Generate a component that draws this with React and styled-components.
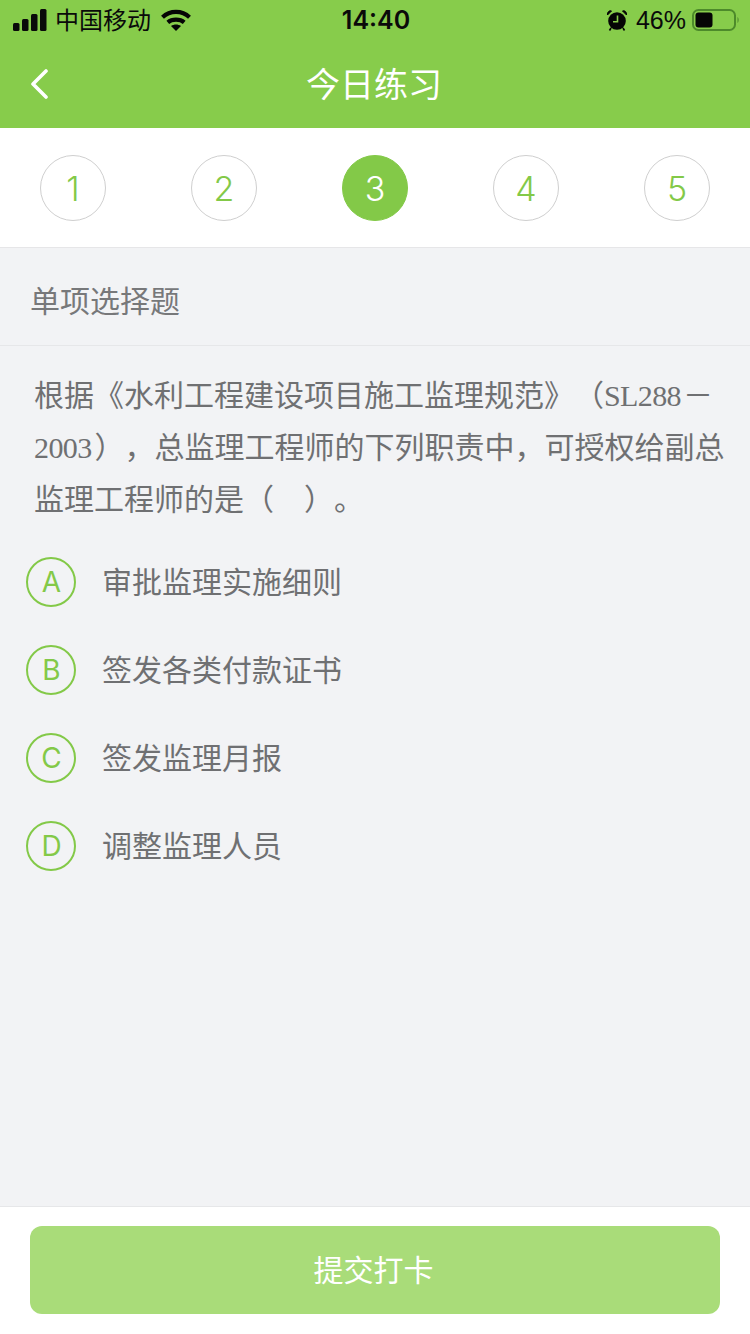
import styled, { createGlobalStyle } from "styled-components";

const GlobalStyle = createGlobalStyle`
  html, body {
    margin: 0;
    padding: 0;
    background: #f2f3f5;
  }
  * {
    box-sizing: border-box;
  }
`;

const SANS = `"Liberation Sans", "Noto Sans CJK SC", sans-serif`;
const SERIF = `"Liberation Serif", "Noto Sans CJK SC", serif`;

const steps = [1, 2, 3, 4, 5];
const options = [
  { key: "A", text: "审批监理实施细则" },
  { key: "B", text: "签发各类付款证书" },
  { key: "C", text: "签发监理月报" },
  { key: "D", text: "调整监理人员" },
];

const SignalIcon = () => (
  <svg width="34" height="22" viewBox="0 0 34 22" fill="#0a0a0a">
    <rect x="0" y="14" width="6.500" height="8" rx="1.500" />
    <rect x="9" y="10" width="6.500" height="12" rx="1.500" />
    <rect x="18" y="5" width="6.500" height="17" rx="1.500" />
    <rect x="27" y="0" width="6.500" height="22" rx="1.500" />
  </svg>
);

const WifiIcon = () => (
  <svg width="30" height="22" viewBox="0 0 30 22" fill="none" stroke="#050505" strokeWidth="4.200">
    <path d="M1.500 8.200 C9 1.200 21 1.200 28.500 8.200" />
    <path d="M6.800 13.400 C11 9.800 19 9.800 23.200 13.400" />
    <path d="M15 22 L10 17 C13 15 17 15 20 17 Z" fill="#050505" stroke="none" />
  </svg>
);

const AlarmIcon = () => (
  <svg width="22" height="22" viewBox="0 0 22 22">
    <circle cx="11" cy="12" r="8.800" fill="#050505" />
    <path d="M1.500 6 L5.500 2 C3.500 1 1 3 1.500 6 Z M20.500 6 L16.500 2 C18.500 1 21 3 20.500 6 Z" fill="#050505" stroke="#050505" strokeWidth="1" />
    <path d="M11.500 6.500 V12.800 H7" fill="none" stroke="#87cc4b" strokeWidth="1.600" />
    <path d="M5 19 L3.500 21.500 M17 19 L18.500 21.500" stroke="#050505" strokeWidth="1.600" />
  </svg>
);

const BatteryIcon = () => (
  <svg width="48" height="22" viewBox="0 0 48 22">
    <rect x="1" y="1" width="42" height="20" rx="5.500" fill="none" stroke="#4d8a2b" strokeWidth="2" />
    <rect x="3.500" y="3.500" width="17" height="15" rx="3" fill="#050505" />
    <path d="M45.500 8 C47 9 47 13 45.500 14 Z" fill="#4d8a2b" />
  </svg>
);

const BackIcon = () => (
  <svg width="18" height="30" viewBox="0 0 18 30" fill="none" stroke="#fff" strokeWidth="3.600" strokeLinecap="round" strokeLinejoin="round">
    <path d="M16 2 L3 15 L16 28" />
  </svg>
);

const App = () => {
  return (
    <Page>
      <GlobalStyle />
      <Header>
        <StatusBar>
          <StatusLeft>
            <SignalIcon />
            <Carrier>中国移动</Carrier>
            <WifiIcon />
          </StatusLeft>
          <Clock>14:40</Clock>
          <StatusRight>
            <AlarmIcon />
            <BatteryLevel>46%</BatteryLevel>
            <BatteryIcon />
          </StatusRight>
        </StatusBar>
        <NavBar>
          <BackButton>
            <BackIcon />
          </BackButton>
          <NavTitle>今日练习</NavTitle>
        </NavBar>
      </Header>

      <StepBar>
        {steps.map((step) => (
          <Step key={step} $active={step === 3}>
            {step}
          </Step>
        ))}
      </StepBar>

      <Main>
        <QuestionType>单项选择题</QuestionType>
        <Question>
          根据《水利工程建设项目施工监理规范》（<Latin>SL288</Latin>
          <Dash>－</Dash>
          <br />
          <Latin $tail={3}>2003</Latin>），总监理工程师的下列职责中，可授权给副总
          <br />
          监理工程师的是（　）。
        </Question>
        <OptionList>
          {options.map((option) => (
            <Option key={option.key}>
              <OptionKey>{option.key}</OptionKey>
              <OptionText>{option.text}</OptionText>
            </Option>
          ))}
        </OptionList>
      </Main>

      <Footer>
        <SubmitButton>提交打卡</SubmitButton>
      </Footer>
    </Page>
  );
};

export default App;

const Page = styled.div`
  display: flex;
  flex-direction: column;
  width: 750px;
  height: 1334px;
  overflow: hidden;
  background: #f2f3f5;
  font-family: ${SANS};
`;

const Header = styled.header`
  background: #87cc4b;
`;

const StatusBar = styled.div`
  display: grid;
  grid-template-columns: 1fr auto 1fr;
  align-items: center;
  height: 40px;
  padding: 0 10px 0 13px;
  color: #0a0a0a;
`;

const StatusLeft = styled.div`
  display: flex;
  align-items: center;
  gap: 8px;
`;

const Carrier = styled.span`
  padding-bottom: 4px;
  margin-right: 2px;
  font-size: 24px;
`;

const Clock = styled.span`
  margin-left: -1px;
  font-family: "Inter", sans-serif;
  font-size: 25px;
  font-weight: 600;
`;

const StatusRight = styled.div`
  display: flex;
  align-items: center;
  justify-content: flex-end;
  gap: 8px;
`;

const BatteryLevel = styled.span`
  margin-right: -2px;
  font-size: 25px;
`;

const NavBar = styled.div`
  display: grid;
  grid-template-columns: 1fr auto 1fr;
  align-items: center;
  height: 88px;
  padding-left: 30px;
`;

const BackButton = styled.div`
  display: flex;
  align-items: center;
`;

const NavTitle = styled.h1`
  margin: 0 0 0 -32px;
  padding-bottom: 4px;
  font-size: 34px;
  font-weight: 400;
  color: #fff;
`;

const StepBar = styled.div`
  display: flex;
  justify-content: space-between;
  height: 120px;
  padding: 27px 40px 0;
  background: #fff;
  border-bottom: 1px solid #e6e6e8;
`;

const Step = styled.div`
  display: flex;
  align-items: center;
  justify-content: center;
  width: 66px;
  height: 66px;
  border-radius: 50%;
  border: 1px solid ${(p) => (p.$active ? "#83c948" : "#cfcfcf")};
  background: ${(p) => (p.$active ? "#83c948" : "#fff")};
  color: ${(p) => (p.$active ? "#fff" : "#83c948")};
  font-family: "Inter", sans-serif;
  font-size: 34px;
  font-weight: 350;
`;

const Main = styled.main`
  flex: 1;
  display: flex;
  flex-direction: column;
  background: #f2f3f5;
`;

const QuestionType = styled.div`
  display: flex;
  align-items: center;
  height: 98px;
  padding: 4px 0 0 30px;
  border-bottom: 1px solid #e6e7e9;
  font-size: 30px;
  color: #77787a;
`;

const Question = styled.p`
  margin: 0;
  padding: 24px 0 0 34px;
  font-family: ${SERIF};
  font-size: 30px;
  line-height: 52px;
  color: #6f7072;
  white-space: nowrap;
  text-spacing-trim: space-all;
`;

const Latin = styled.span`
  margin-right: ${(p) => p.$tail || 0}px;
  letter-spacing: -0.600px;
`;

const Dash = styled.span`
  margin-left: 2px;
`;

const OptionList = styled.ul`
  display: flex;
  flex-direction: column;
  gap: 38px;
  margin: 0;
  padding: 31px 0 0 26px;
  list-style: none;
`;

const Option = styled.li`
  display: flex;
  align-items: center;
  gap: 26px;
`;

const OptionKey = styled.span`
  display: flex;
  align-items: center;
  justify-content: center;
  width: 50px;
  height: 50px;
  padding-left: 1px;
  border-radius: 50%;
  border: 2px solid #83c948;
  color: #83c948;
  font-family: "Inter", sans-serif;
  font-size: 28px;
  font-weight: 400;
`;

const OptionText = styled.span`
  padding-bottom: 4px;
  font-size: 30px;
  color: #6f7072;
`;

const Footer = styled.footer`
  height: 128px;
  padding: 19px 30px 0;
  background: #fff;
  border-top: 1px solid #e6e7e9;
`;

const SubmitButton = styled.div`
  display: flex;
  align-items: center;
  justify-content: center;
  height: 88px;
  padding: 0 3px 4px 0;
  border-radius: 12px;
  background: #a9dc79;
  color: #fff;
  font-size: 30px;
`;
